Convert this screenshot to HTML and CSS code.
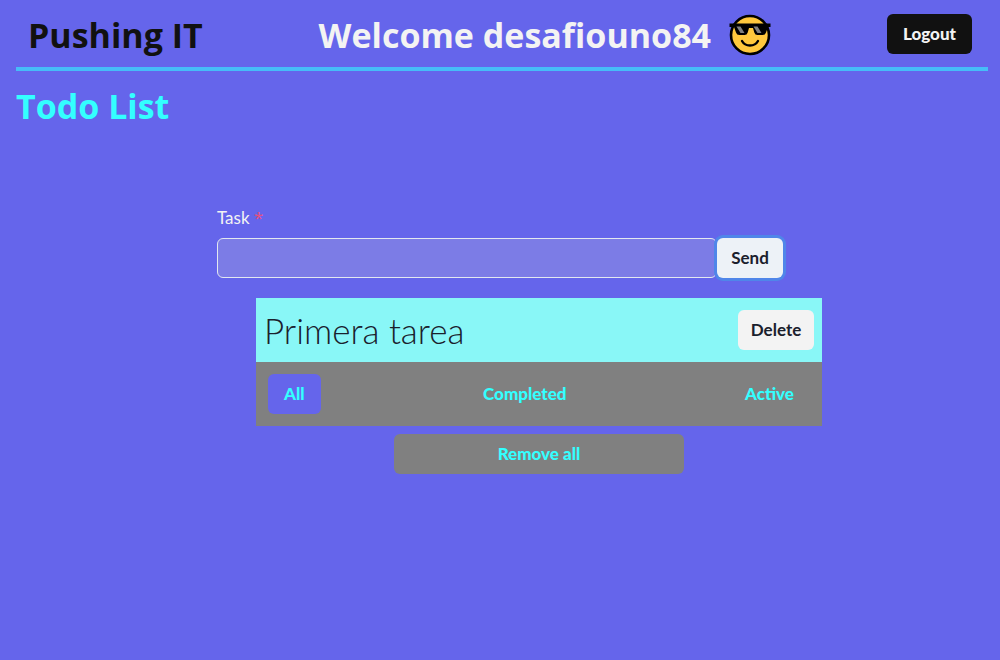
FILE: index.html
```html
<!DOCTYPE html>
<html lang="es">
<head>
<meta charset="utf-8">
<meta name="viewport" content="width=device-width, initial-scale=1">
<title>Todo List</title>
<link rel="stylesheet" href="styles.css">
</head>
<body>
<header class="header">
  <p class="brand">Pushing IT</p>
  <div class="welcome">
    <h1 class="heading">Welcome desafiouno84</h1>
    <svg class="emoji" viewBox="0 0 42 42" role="img" aria-label="Sunglasses">
      <circle cx="21" cy="21" r="19" fill="#ffc83d" stroke="#000" stroke-width="2.6"/>
      <path d="M.5 9.500h41v3.500h-2.500l-2 5.500q-.8 2.500-3.300 2.500h-5.200q-2.500 0-3.200-2.500l-1.300-4.500h-4l-1.300 4.500q-.7 2.500-3.200 2.500h-5.200q-2.500 0-3.300-2.500l-2-5.500H.5z" fill="#000"/>
      <path d="M7.500 12.500h4l4 6.500h-4zM24.500 12.500h4l4 6.500h-4z" fill="#808080"/>
      <path d="M13 27q2.500 4.500 8 4.500t8-4.500" fill="none" stroke="#000" stroke-width="2.400" stroke-linecap="round"/>
    </svg>
  </div>
  <button class="button logout" type="button">Logout</button>
</header>
<main class="page">
  <h2 class="title">Todo List</h2>
  <div class="content">
    <form class="task-form">
      <label class="label" for="task">Task <span class="required">*</span></label>
      <div class="field">
        <input class="input" id="task" type="text" required>
        <button class="button send" type="submit">Send</button>
      </div>
    </form>
    <section class="board">
      <ul class="tasks">
        <li class="task">
          <span class="task-name">Primera tarea</span>
          <button class="button delete" type="button">Delete</button>
        </li>
      </ul>
      <nav class="filters">
        <button class="button filter active" type="button">All</button>
        <button class="button filter" type="button">Completed</button>
        <button class="button filter" type="button">Active</button>
      </nav>
      <button class="button remove" type="button">Remove all</button>
    </section>
  </div>
</main>
</body>
</html>
```
FILE: styles.css
```css
* {
  box-sizing: border-box;
}

body {
  margin: 0;
  background: #6565eb;
  color: #f3f3f3;
  font-family: Lato, sans-serif;
  font-size: 17px;
  line-height: 24px;
}

.header {
  display: flex;
  align-items: center;
  justify-content: space-between;
  margin: 0 12px 0 16px;
  padding: 8px 16px 5px 12px;
  border-bottom: 4px solid #46bdf8;
}

.brand,
.heading,
.title {
  margin: 0;
  font-family: "Open Sans", sans-serif;
  font-size: 34px;
  font-weight: 700;
  line-height: 54px;
}

.brand {
  color: #111;
}

.welcome {
  display: flex;
  align-items: center;
  gap: 18px;
}

.emoji {
  width: 42px;
  height: 42px;
}

.button {
  height: 40px;
  padding: 0 16px;
  border: 0;
  border-radius: 6px;
  font: inherit;
  font-weight: 700;
  cursor: pointer;
}

.logout {
  align-self: flex-start;
  margin-top: 6px;
  background: #111;
  color: #f3f3f3;
  font-weight: 900;
}

.page {
  padding: 8px 16px;
}

.title {
  color: #3ff;
}

.content {
  width: 62.5%;
  margin: 73px auto 0 201px;
}

.task-form {
  padding-right: 39px;
}

.label {
  display: block;
  margin-bottom: 8px;
}

.required {
  color: #e8507c;
  font-family: "Open Sans", sans-serif;
}

.field {
  display: flex;
}

.input {
  flex: 1;
  min-width: 0;
  height: 40px;
  padding: 0 16px;
  border: 1px solid #e2e8f0;
  border-radius: 6px;
  background: #7c7ce6;
  color: inherit;
  font: inherit;
}

.send {
  width: 66px;
  padding: 0;
  background: #edf2f7;
  color: #1a202c;
  box-shadow: 0 0 0 3px #4f86e9;
}

.board {
  display: flex;
  flex-direction: column;
  margin: 20px 0 0 39px;
}

.tasks {
  margin: 0;
  padding: 0;
  list-style: none;
}

.task {
  display: flex;
  align-items: center;
  justify-content: space-between;
  height: 64px;
  padding: 0 8px;
  background: #89f7f7;
  color: #1a202c;
}

.task-name {
  font-size: 35px;
  font-weight: 300;
  line-height: 48px;
}

.delete {
  width: 76px;
  padding: 0;
  background: #f3f3f3;
  color: #1a202c;
}

.filters {
  display: flex;
  justify-content: space-between;
  padding: 12px;
  background: #808080;
}

.filter {
  background: transparent;
  color: #3ff;
  font-weight: 900;
}

.active {
  background: #6565eb;
}

.remove {
  align-self: center;
  width: 51.4%;
  margin-top: 8px;
  background: #808080;
  color: #3ff;
  font-weight: 900;
}
```
